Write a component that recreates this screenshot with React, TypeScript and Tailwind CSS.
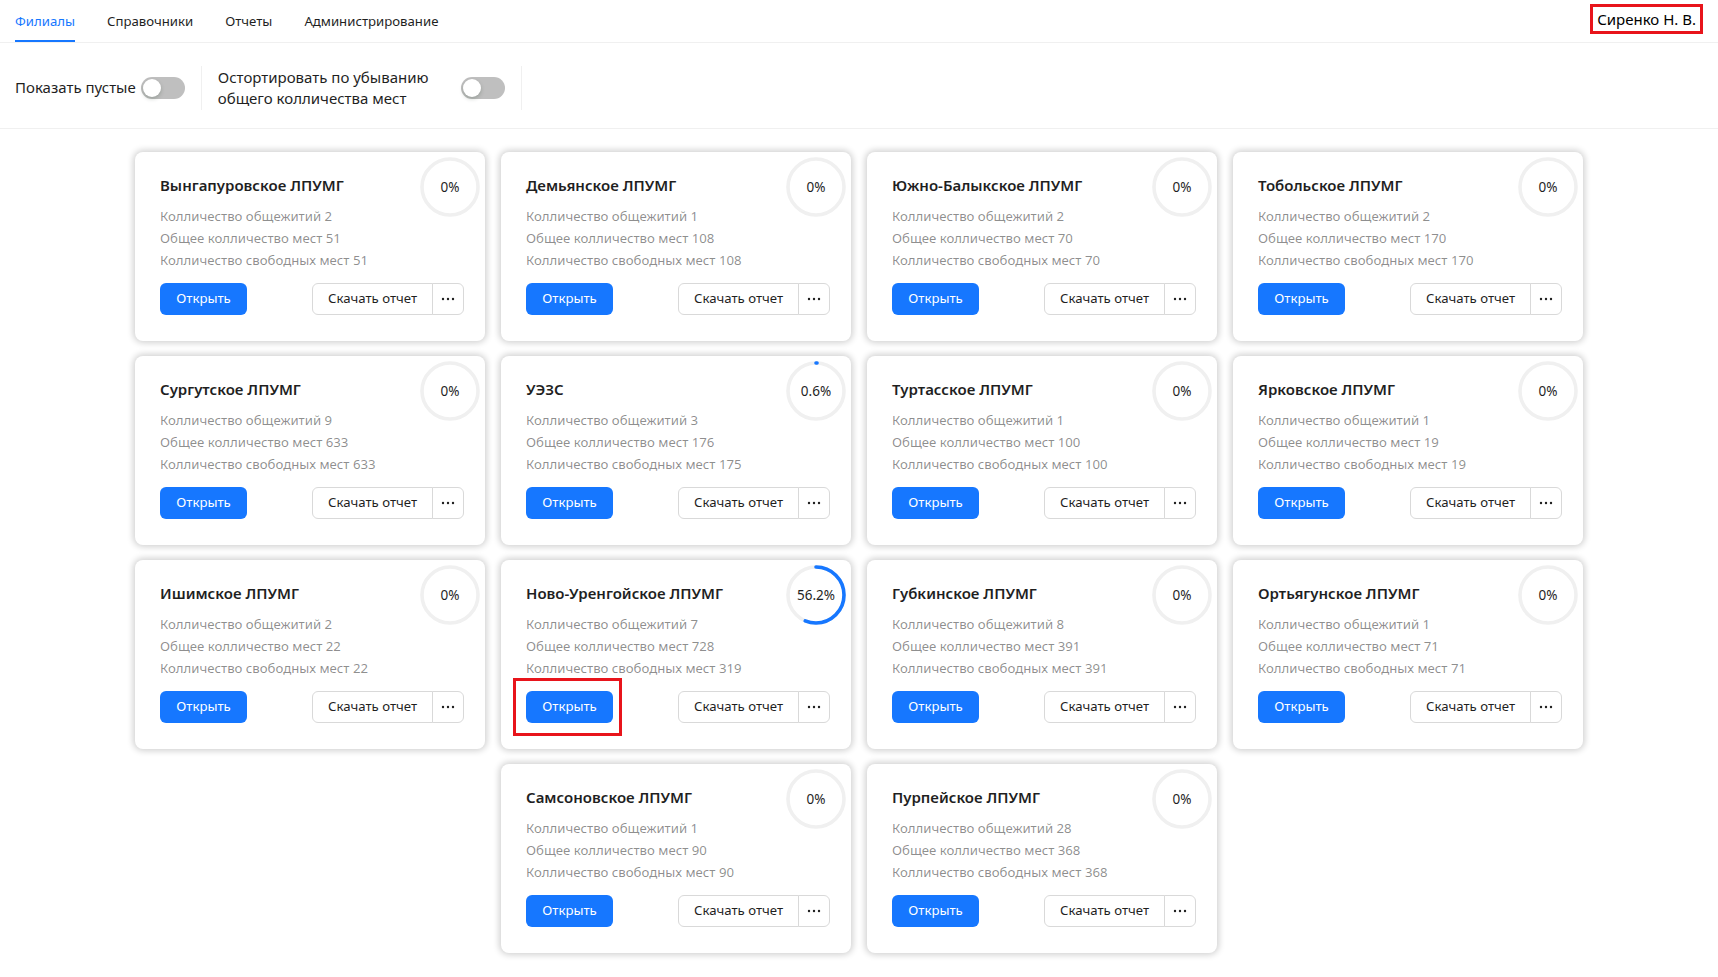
import React from "react";

type Branch = {
  name: string;
  dorms: number;
  total: number;
  free: number;
  percent: number;
  label: string;
};

const branches: Branch[] = [
  { name: "Вынгапуровское ЛПУМГ", dorms: 2, total: 51, free: 51, percent: 0, label: "0%" },
  { name: "Демьянское ЛПУМГ", dorms: 1, total: 108, free: 108, percent: 0, label: "0%" },
  { name: "Южно-Балыкское ЛПУМГ", dorms: 2, total: 70, free: 70, percent: 0, label: "0%" },
  { name: "Тобольское ЛПУМГ", dorms: 2, total: 170, free: 170, percent: 0, label: "0%" },
  { name: "Сургутское ЛПУМГ", dorms: 9, total: 633, free: 633, percent: 0, label: "0%" },
  { name: "УЭЗС", dorms: 3, total: 176, free: 175, percent: 0.6, label: "0.6%" },
  { name: "Туртасское ЛПУМГ", dorms: 1, total: 100, free: 100, percent: 0, label: "0%" },
  { name: "Ярковское ЛПУМГ", dorms: 1, total: 19, free: 19, percent: 0, label: "0%" },
  { name: "Ишимское ЛПУМГ", dorms: 2, total: 22, free: 22, percent: 0, label: "0%" },
  { name: "Ново-Уренгойское ЛПУМГ", dorms: 7, total: 728, free: 319, percent: 56.2, label: "56.2%" },
  { name: "Губкинское ЛПУМГ", dorms: 8, total: 391, free: 391, percent: 0, label: "0%" },
  { name: "Ортьягунское ЛПУМГ", dorms: 1, total: 71, free: 71, percent: 0, label: "0%" },
  { name: "Самсоновское ЛПУМГ", dorms: 1, total: 90, free: 90, percent: 0, label: "0%" },
  { name: "Пурпейское ЛПУМГ", dorms: 28, total: 368, free: 368, percent: 0, label: "0%" },
];

const tabs = ["Филиалы", "Справочники", "Отчеты", "Администрирование"];

function Switch() {
  return (
    <div className="w-[44px] h-[22px] rounded-full bg-[#bfbfbf] p-[2px] flex items-center shrink-0">
      <div className="w-[18px] h-[18px] rounded-full bg-white shadow-[0_2px_4px_rgba(0,35,11,0.2)]" />
    </div>
  );
}

function ProgressCircle({ percent, label }: { percent: number; label: string }) {
  const r = 28;
  const c = 2 * Math.PI * r;
  const len = (percent / 100) * c;
  return (
    <div className="relative w-[60px] h-[60px] -my-[18px] -mr-[16px] shrink-0 flex items-center justify-center">
      <svg width="60" height="60" viewBox="0 0 60 60" className="absolute inset-0 -rotate-90">
        <circle cx="30" cy="30" r={r} fill="none" stroke="#f0f0f0" strokeWidth="3.6" />
        {percent > 0 && (
          <circle
            cx="30"
            cy="30"
            r={r}
            fill="none"
            stroke="#1677ff"
            strokeWidth="3.6"
            strokeLinecap="round"
            strokeDasharray={`${Math.max(len, 0.01)} ${c}`}
          />
        )}
      </svg>
      <span className="relative text-[13.5px] text-[#1f1f1f]">{label}</span>
    </div>
  );
}

function Dots() {
  return (
    <svg width="14" height="4" viewBox="0 0 14 4" fill="#1f1f1f">
      <circle cx="2" cy="2" r="1.2" />
      <circle cx="7" cy="2" r="1.2" />
      <circle cx="12" cy="2" r="1.2" />
    </svg>
  );
}

function BranchCard({ b, highlight }: { b: Branch; highlight?: boolean }) {
  return (
    <div className="w-[350px] h-[189px] bg-white rounded-lg shadow-[0_0_6px_2px_rgba(0,0,0,0.18)] pl-[25px] pr-[21px] pt-[23px] flex flex-col">
      {/* Header */}
      <div className="h-6 flex items-center justify-between">
        <span className="text-[15px] font-semibold text-[#1f1f1f] leading-6 mb-[4px]">{b.name}</span>
        <ProgressCircle percent={b.percent} label={b.label} />
      </div>

      {/* Stats */}
      <div className="mt-[7px] text-[13.2px] leading-[20px] text-black/45 flex flex-col gap-[2px]">
        <div>Колличество общежитий {b.dorms}</div>
        <div>Общее колличество мест {b.total}</div>
        <div>Колличество свободных мест {b.free}</div>
      </div>

      {/* Actions */}
      <div className="mt-[13px] flex items-center justify-between">
        <div className={highlight ? "relative" : ""}>
          <button className="w-[87px] h-8 rounded-md bg-[#1677ff] text-white text-[13.2px]">Открыть</button>
          {highlight && (
            <div className="absolute -left-[13px] -top-[13px] w-[109px] h-[58px] border-[3px] border-[#e8141b] pointer-events-none" />
          )}
        </div>
        <div className="flex">
          <button className="w-[121px] h-8 rounded-l-md border border-[#d9d9d9] bg-white text-[13.2px] text-[#1f1f1f]">
            Скачать отчет
          </button>
          <button className="w-[32px] h-8 -ml-px rounded-r-md border border-[#d9d9d9] bg-white flex items-center justify-center">
            <Dots />
          </button>
        </div>
      </div>
    </div>
  );
}

export default function App() {
  return (
    <div className="min-h-screen bg-white text-[#1f1f1f]" style={{ fontFamily: '"Noto Sans", "Open Sans", sans-serif' }}>
      {/* Top navigation */}
      <div className="h-[43px] border-b border-[#f0f0f0] flex items-stretch justify-between pl-[15px] pr-[15px]">
        <div className="flex gap-[32px]">
          {tabs.map((t, i) => (
            <div
              key={t}
              className={
                "flex items-center pt-[4px] text-[13.2px] border-b-2 " +
                (i === 0 ? "text-[#1677ff] border-[#1677ff]" : "text-[#1f1f1f] border-transparent")
              }
            >
              {t}
            </div>
          ))}
        </div>
        <div className="flex items-start pt-[4px]">
          <div className="border-[3px] border-[#e8141b] px-[4px] h-[30px] flex items-center text-[15px] text-black">
            Сиренко Н. В.
          </div>
        </div>
      </div>

      {/* Filters */}
      <div className="h-[86px] border-b border-[#f0f0f0] flex items-center pl-[15px] pt-[4px]">
        <div className="flex items-center gap-[5px]">
          <span className="text-[15px]">Показать пустые</span>
          <Switch />
        </div>
        <div className="w-px h-[44px] bg-[#f0f0f0] mx-[16px]" />
        <div className="flex items-center gap-[7px]">
          <span className="w-[236px] text-[15px] leading-[21px]">Остортировать по убыванию общего колличества мест</span>
          <Switch />
        </div>
        <div className="w-px h-[44px] bg-[#f0f0f0] mx-[16px]" />
      </div>

      {/* Cards */}
      <div className="w-[1448px] mx-auto pt-[23px] pb-6 flex flex-wrap justify-center gap-x-4 gap-y-[15px]">
        {branches.map((b) => (
          <BranchCard key={b.name} b={b} highlight={b.name === "Ново-Уренгойское ЛПУМГ"} />
        ))}
      </div>
    </div>
  );
}
